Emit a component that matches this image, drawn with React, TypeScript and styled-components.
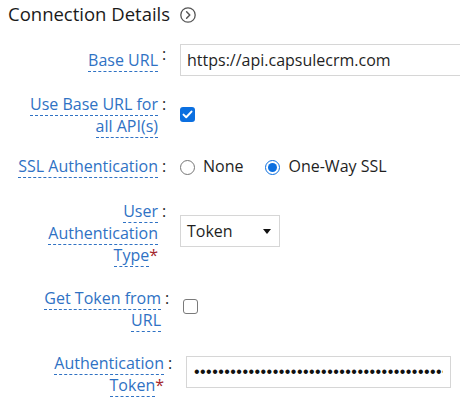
import React from "react";
import styled, { createGlobalStyle } from "styled-components";

const GlobalStyle = createGlobalStyle`
  html, body { margin: 0; padding: 0; background: #ffffff; overflow: hidden; }
  body { font-family: "Open Sans", "Noto Sans", sans-serif; color: #1f1f1f; }
  * { box-sizing: border-box; }
`;

const Page = styled.div`
  width: 460px;
  height: 402px;
  padding: 2px 0 0 8px;
  overflow: hidden;
`;

const Heading = styled.h2`
  margin: 0;
  display: flex;
  align-items: center;
  gap: 10px;
  font-size: 18.5px;
  font-weight: 400;
  line-height: 24px;
  color: #1a1a1a;
`;

const HeadIcon = styled.svg`
  width: 16px;
  height: 16px;
  margin-top: 1px;
`;

const Form = styled.div`
  display: flex;
  flex-direction: column;
`;

const Row = styled.div<{ $gap: number; $shift?: number }>`
  display: grid;
  grid-template-columns: ${(p) => 150 + (p.$shift ?? 0)}px 22px auto;
  align-items: center;
  margin-top: ${(p) => p.$gap}px;
`;

const LabelCell = styled.div`
  padding-left: 6px;
  text-align: right;
  font-size: 16px;
  line-height: 22px;
`;

const Label = styled.span`
  color: #2f72c4;
  border-bottom: 1px dashed #2f72c4;
`;

const Req = styled.span`
  color: #a4262c;
`;

const Colon = styled.div`
  align-self: start;
  padding-left: 4px;
  font-size: 16px;
  line-height: 22px;
  color: #1f1f1f;
`;

const Control = styled.div<{ $lift?: number }>`
  display: flex;
  align-items: center;
  margin-bottom: ${(p) => Math.max(0, (p.$lift ?? 0) * 2)}px;
  margin-top: ${(p) => Math.max(0, -(p.$lift ?? 0) * 2)}px;
`;

const TextInput = styled.input<{ $w: number; $pad: number }>`
  width: ${(p) => p.$w}px;
  height: 32px;
  border: 1px solid #d6d6d6;
  border-radius: 0;
  padding: 0 ${(p) => p.$pad}px;
  font-family: "Open Sans", sans-serif;
  font-size: 16px;
  color: #1f1f1f;
  outline: none;
  background: #fff;
`;

const PasswordInput = styled(TextInput)`
  font-family: "Liberation Sans", sans-serif;
  font-size: 16px;
  letter-spacing: 0.45px;
  color: #111;
`;

const Check = styled.span<{ $on?: boolean }>`
  display: inline-flex;
  align-items: center;
  justify-content: center;
  width: 15px;
  height: 15px;
  border-radius: 3px;
  background: ${(p) => (p.$on ? "#0b6fe0" : "#ffffff")};
  border: ${(p) => (p.$on ? "none" : "1.5px solid #7a7a7a")};
`;

const RadioGroup = styled.div`
  display: flex;
  align-items: center;
  gap: 22px;
`;

const RadioItem = styled.label`
  display: flex;
  align-items: center;
  gap: 8px;
  font-size: 16px;
  line-height: 22px;
  color: #1f1f1f;
`;

const RadioDot = styled.span<{ $on?: boolean }>`
  width: 15px;
  height: 15px;
  border-radius: 50%;
  border: 1px solid ${(p) => (p.$on ? "#0b6fe0" : "#767676")};
  display: inline-flex;
  align-items: center;
  justify-content: center;
  margin-top: 2px;
  &::after {
    content: "";
    width: 9px;
    height: 9px;
    border-radius: 50%;
    background: ${(p) => (p.$on ? "#0b6fe0" : "transparent")};
  }
`;

const Select = styled.div`
  width: 100px;
  height: 32px;
  border: 1px solid #d6d6d6;
  display: flex;
  align-items: center;
  justify-content: space-between;
  padding: 0 8px 0 6px;
  font-size: 16px;
  color: #1f1f1f;
`;

const Caret = styled.span`
  width: 0;
  height: 0;
  border-left: 4.5px solid transparent;
  border-right: 4.5px solid transparent;
  border-top: 5px solid #111;
  margin-top: 1px;
`;

export default function App() {
  return (
    <>
      <GlobalStyle />
      <Page>
        <Heading>
          Connection Details
          <HeadIcon viewBox="0 0 16 16" fill="none">
            <circle cx="8" cy="8" r="7.2" stroke="#555" strokeWidth="1.3" />
            <path d="M6.6 4.8 L9.8 8 L6.6 11.2" stroke="#555" strokeWidth="1.5" strokeLinecap="round" strokeLinejoin="round" />
          </HeadIcon>
        </Heading>
        <Form>
          <Row $gap={17}>
            <LabelCell><Label>Base URL</Label></LabelCell>
            <Colon>:</Colon>
            <Control $lift={-0.5}>
              <TextInput $w={290} $pad={6} defaultValue="https://api.capsulecrm.com" />
            </Control>
          </Row>
          <Row $gap={17}>
            <LabelCell><Label>Use Base URL for all API(s)</Label></LabelCell>
            <Colon>:</Colon>
            <Control $lift={1}>
              <Check $on>
                <svg width="11" height="9" viewBox="0 0 11 9" fill="none">
                  <path d="M1.5 4.6 L4.2 7.2 L9.5 1.6" stroke="#fff" strokeWidth="2" strokeLinecap="round" strokeLinejoin="round" />
                </svg>
              </Check>
            </Control>
          </Row>
          <Row $gap={18}>
            <LabelCell><Label>SSL Authentication</Label></LabelCell>
            <Colon>:</Colon>
            <Control>
              <RadioGroup>
                <RadioItem><RadioDot />None</RadioItem>
                <RadioItem><RadioDot $on />One-Way SSL</RadioItem>
              </RadioGroup>
            </Control>
          </Row>
          <Row $gap={23}>
            <LabelCell><Label>User Authentication Type</Label><Req>*</Req></LabelCell>
            <Colon>:</Colon>
            <Control $lift={2.5}>
              <Select>
                Token
                <Caret />
              </Select>
            </Control>
          </Row>
          <Row $gap={21} $shift={3}>
            <LabelCell><Label>Get Token from URL</Label></LabelCell>
            <Colon>:</Colon>
            <Control $lift={2.5}>
              <Check />
            </Control>
          </Row>
          <Row $gap={21} $shift={6}>
            <LabelCell><Label>Authentication Token</Label><Req>*</Req></LabelCell>
            <Colon>:</Colon>
            <Control $lift={2.5}>
              <PasswordInput
                type="password"
                $w={265}
                $pad={7}
                readOnly
                defaultValue={"x".repeat(42)}
              />
            </Control>
          </Row>
        </Form>
      </Page>
    </>
  );
}
